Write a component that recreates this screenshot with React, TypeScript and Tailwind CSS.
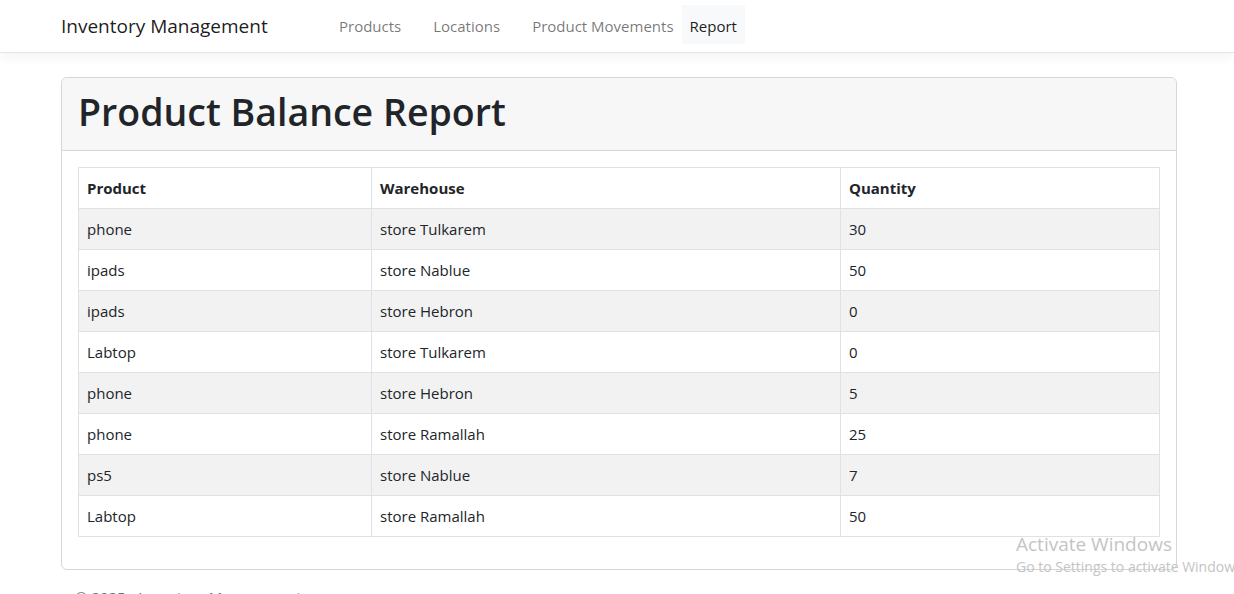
import React from "react";

const rows = [
  ["phone", "store Tulkarem", "30"],
  ["ipads", "store Nablue", "50"],
  ["ipads", "store Hebron", "0"],
  ["Labtop", "store Tulkarem", "0"],
  ["phone", "store Hebron", "5"],
  ["phone", "store Ramallah", "25"],
  ["ps5", "store Nablue", "7"],
  ["Labtop", "store Ramallah", "50"],
];

export default function App() {
  return (
    <div
      className="relative h-[594px] overflow-hidden bg-white text-[#212529]"
      style={{ fontFamily: '"Open Sans", "Noto Sans", sans-serif' }}
    >
      <nav className="h-[53px] border-b border-[#e5e5e5] bg-white shadow-[0_4px_12px_rgba(0,0,0,0.05)]">
        <div className="flex h-[52px] items-start pl-[61px] pt-[5px]">
          <div className="flex h-[39px] w-[270px] items-center pt-[3px] text-[19px] text-[rgba(0,0,0,0.9)]">Inventory Management</div>
          <div className="flex h-[39px] items-center text-[15px] text-[rgba(0,0,0,0.55)]">
            <a className="flex h-full items-center px-2 pt-[3px]">Products</a>
            <a className="ml-4 flex h-full items-center px-2 pt-[3px]">Locations</a>
            <a className="ml-4 flex h-full items-center px-2 pt-[3px]">Product Movements</a>
            <a className="flex h-full items-center bg-[#f8f9fa] px-2 pt-[3px] text-[rgba(0,0,0,0.9)]">Report</a>
          </div>
        </div>
      </nav>

      <main className="ml-[61px] mt-[24px] w-[1116px]">
        <div className="rounded-[6px] border border-[#d6d6d6]">
          <div className="rounded-t-[6px] border-b border-[#d6d6d6] bg-[#f7f7f7] px-4 pb-[14px] pt-[10px]">
            <h1 className="text-[37.5px] font-semibold leading-[48px]">Product Balance Report</h1>
          </div>
          <div className="p-4">
            <table className="mb-4 w-full border-collapse text-[15px] leading-6">
              <colgroup>
                <col className="w-[293px]" />
                <col className="w-[469px]" />
                <col />
              </colgroup>
              <thead>
                <tr>
                  <th className="border border-[#dee2e6] px-2 py-2 text-left font-bold">Product</th>
                  <th className="border border-[#dee2e6] px-2 py-2 text-left font-bold">Warehouse</th>
                  <th className="border border-[#dee2e6] px-2 py-2 text-left font-bold">Quantity</th>
                </tr>
              </thead>
              <tbody>
                {rows.map((r, i) => (
                  <tr key={i} className={i % 2 === 0 ? "bg-[#f2f2f2]" : "bg-white"}>
                    {r.map((c, j) => (
                      <td key={j} className="border border-[#dee2e6] px-2 py-2">{c}</td>
                    ))}
                  </tr>
                ))}
              </tbody>
            </table>
          </div>
        </div>
        <footer className="mt-[15px] pl-[14px] text-[15px] leading-6 text-[#6c757d]">© 2025 - Inventory Management</footer>
      </main>

      <div className="pointer-events-none absolute left-[1016px] top-[531px] whitespace-nowrap text-[#c4c4c4]">
        <div className="text-[19px] leading-[26px]">Activate Windows</div>
        <div className="text-[14px] leading-[20px]">Go to Settings to activate Windows.</div>
      </div>
    </div>
  );
}
